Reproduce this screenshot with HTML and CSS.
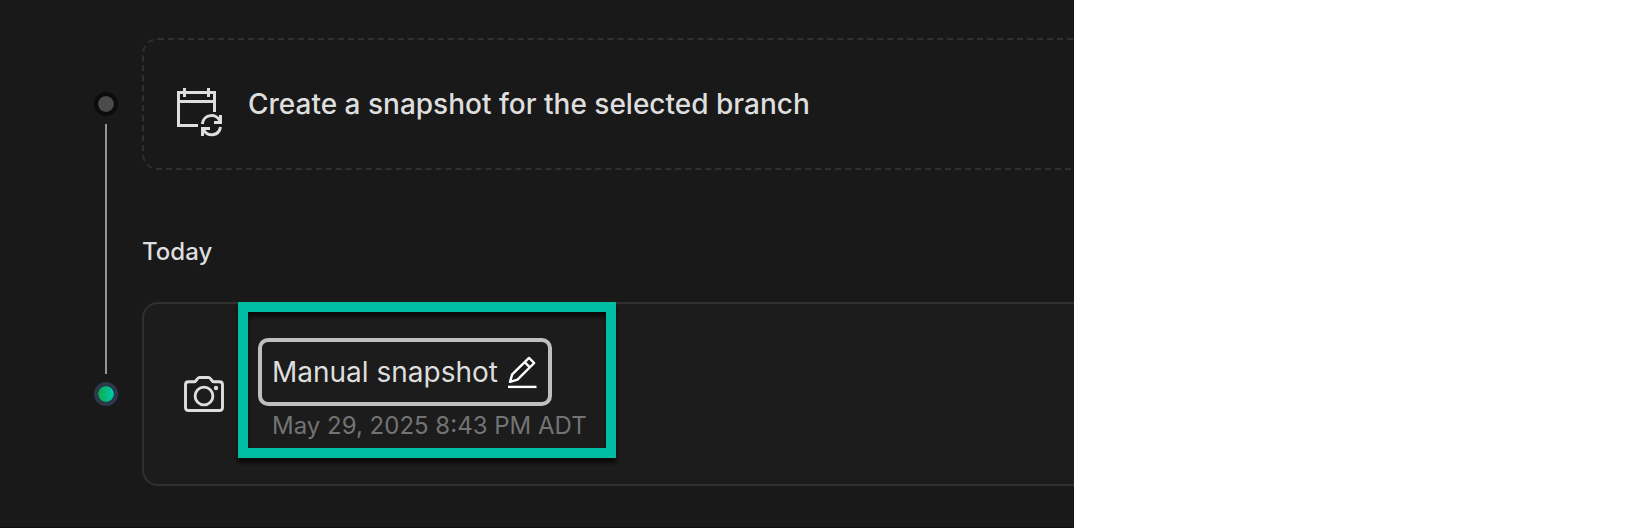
FILE: index.html
```html
<!DOCTYPE html>
<html lang="en">
<head>
<meta charset="utf-8">
<title>Snapshots</title>
<link rel="stylesheet" href="styles.css">
</head>
<body>
<main class="panel">
  <div class="rail">
    <span class="dot"></span>
    <span class="line"></span>
    <span class="dot dot-active"></span>
  </div>
  <div class="content">
    <section class="card card-create">
      <svg class="calendar" width="48" height="50" viewBox="176 87 48 50" fill="none" stroke="#dedede" stroke-width="3">
        <path d="M214.500 112V92.500H178.500V125.500H198M178 101.500H215M184.500 88V97M208.500 88V97"/>
        <path d="M202.300 124C203.500 113.500 217 113 220 121.500M214 122.500H222M220.500 115V124M220.500 127C219 136.500 206.500 137.500 203.500 129M201 128.500H210M202.500 127V136"/>
      </svg>
      <span class="create-label">Create a snapshot for the selected branch</span>
    </section>
    <h2 class="day">Today</h2>
    <section class="card card-snapshot">
      <svg class="camera" width="42" height="40" viewBox="183 375 42 40" fill="none" stroke="#dedede" stroke-width="2.900">
        <path d="M188.500 381.700H194.200C196.800 381.700 196.800 377.500 199.500 377.500H208.500C211.200 377.500 211.200 381.700 213.800 381.700H219.500Q222.500 381.700 222.500 384.700V407.500Q222.500 410.500 219.500 410.500H188.500Q185.500 410.500 185.500 407.500V384.700Q185.500 381.700 188.500 381.700Z"/>
        <circle cx="204" cy="396" r="8.900"/>
        <circle cx="216" cy="388" r="2.200" fill="#dedede" stroke="none"/>
      </svg>
      <div class="details">
        <div class="name-field">
          <span class="name">Manual snapshot</span>
          <svg class="pencil" width="30" height="34" viewBox="507 355 30 34" fill="none" stroke="#fff" stroke-width="2.400">
            <path d="M510 381.800L512.200 374.300L529 357.900L534.200 363L517.500 379.600Z M524.700 362.200L529.900 367.300" stroke-linejoin="round"/>
            <path d="M508 386.900H536.500"/>
          </svg>
        </div>
        <time class="date">May 29, 2025 8:43 PM ADT</time>
      </div>
      <div class="highlight"></div>
    </section>
  </div>
</main>
</body>
</html>
```
FILE: styles.css
```css
* { box-sizing: border-box; }
body {
  margin: 0;
  background: #fff;
  font-family: Inter, "Liberation Sans", sans-serif;
}
.panel {
  width: 1074px;
  height: 528px;
  display: flex;
  gap: 24px;
  padding: 38px 0 0 94px;
  background: #191919;
  border-bottom: 1px solid #130d12;
  overflow: hidden;
}
.rail {
  width: 24px;
  padding-top: 54px;
  display: flex;
  flex-direction: column;
  align-items: center;
}
.dot {
  flex: none;
  width: 24px;
  height: 24px;
  border: 4px solid #0c0c0c;
  border-radius: 50%;
  background: #4b4b4b;
  background-clip: padding-box;
}
.dot-active {
  border-color: #2b394a;
  background: linear-gradient(90deg, #0cab48, #00c9af) padding-box;
}
.line {
  flex: none;
  width: 2px;
  height: 250px;
  margin: 8px 0;
  background: #949494;
}
.content { flex: 1; min-width: 0; }
.card {
  display: flex;
  border: 2px solid #303030;
  border-right: 0;
  border-radius: 16px 0 0 16px;
}
.card-create {
  height: 132px;
  padding: 47px 0 0 32px;
  gap: 24px;
  border-style: dashed;
}
.create-label {
  font-size: 28px;
  line-height: 34px;
  font-weight: 500;
  color: #dedede;
  white-space: nowrap;
}
.day {
  margin: 67px 0 35px;
  font-size: 24px;
  line-height: 30px;
  font-weight: 500;
  color: #dedede;
}
.card-snapshot {
  position: relative;
  height: 184px;
  padding: 34px 0 0 39px;
  gap: 33px;
  background: #1c1c1c;
}
.camera { margin-top: 37px; }
.name-field {
  width: 294px;
  height: 68px;
  display: flex;
  justify-content: space-between;
  align-items: center;
  padding: 0 11px 0 10px;
  border: 4px solid #bfbfbf;
  border-radius: 10px;
}
.name {
  font-size: 28px;
  line-height: 34px;
  color: #dedede;
  white-space: nowrap;
}
.date {
  display: block;
  margin: 5px 0 0 14px;
  font-size: 24px;
  line-height: 30px;
  color: #737373;
  white-space: nowrap;
}
.highlight {
  position: absolute;
  left: 94px;
  top: -2px;
  width: 378px;
  height: 156px;
  border: 10px solid #00bca2;
  filter: drop-shadow(0 5px 2px rgba(0, 0, 0, 0.65));
}
```
